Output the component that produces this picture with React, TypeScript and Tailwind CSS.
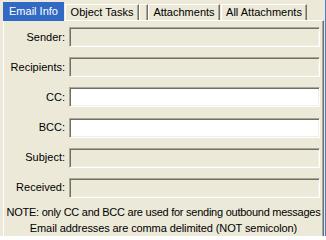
const fields = [
  { label: "Sender:", enabled: false },
  { label: "Recipients:", enabled: false },
  { label: "CC:", enabled: true },
  { label: "BCC:", enabled: true },
  { label: "Subject:", enabled: false },
  { label: "Received:", enabled: false },
];

const tabs = [
  { label: "Object Tasks", w: "w-[74px]", ml: "ml-[1px]" },
  { label: "", w: "w-[9px]", ml: "ml-0" },
  { label: "Attachments", w: "w-[72px]", ml: "ml-0" },
  { label: "All Attachments", w: "w-[86px]", ml: "ml-[1px]" },
];

export default function App() {
  return (
    <div
      className="w-[326px] h-[236px] bg-[#ECE9D8] overflow-hidden flex text-[11px] leading-none text-black"
      style={{ fontFamily: '"Liberation Sans", Arial, sans-serif' }}
    >
      <div className="flex-1 flex flex-col pl-[3px] pr-[1px]">
        <div className="flex items-start h-[20px] pt-[2px]">
          <div className="w-[61px] h-[19px] bg-[#316AC5] text-white flex items-center justify-center relative z-10">
            Email Info
          </div>
          {tabs.map((t, i) => (
            <div
              key={i}
              className={`${t.w} ${t.ml} h-[16px] mt-[2px] border-t border-l border-t-white border-l-white border-r border-r-[#716F64] shadow-[inset_-1px_0_0_#ACA899] flex items-center justify-center text-black`}
            >
              {t.label}
            </div>
          ))}
        </div>

        <div className="flex-1 border-t border-l border-t-white border-l-white border-r border-r-[#716F64] shadow-[inset_-1px_0_0_#ACA899] flex flex-col">
          <div className="flex flex-col gap-[10.2px] pt-[6px]">
            {fields.map((f) => (
              <div key={f.label} className="flex items-center h-[20px]">
                <div className="w-[62px] text-right pr-[1px]">{f.label}</div>
                <div
                  className={`ml-[3px] w-[251px] h-[20px] border border-t-[#ACA899] border-l-[#ACA899] border-b-white border-r-white shadow-[inset_1px_1px_0_#716F64,inset_-1px_-1px_0_#F1EFE2] ${
                    f.enabled ? "bg-white" : "bg-[#ECE9D8]"
                  }`}
                />
              </div>
            ))}
          </div>
          <div className="mt-[9px] text-center whitespace-nowrap tracking-[-0.25px]">
            NOTE: only CC and BCC are used for sending outbound messages
          </div>
          <div className="mt-[5px] text-center whitespace-nowrap tracking-[-0.1px]">
            Email addresses are comma delimited (NOT semicolon)
          </div>
        </div>
      </div>
      <div className="w-[1px] bg-[#4B7BD0]" />
    </div>
  );
}
